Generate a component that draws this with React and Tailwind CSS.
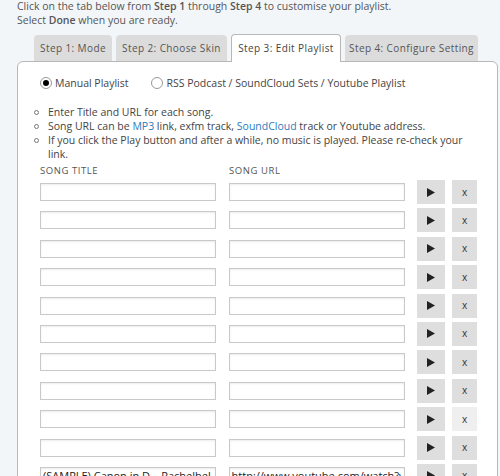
import React from 'react'

const rows = Array.from({ length: 10 }, () => ({ title: '', url: '' }))
rows.push({ title: '(SAMPLE) Canon in D – Pachelbel', url: 'http://www.youtube.com/watch?v=8Af372EQLck' })

function Tab({ label, width, active }) {
  return (
    <div
      className={`${width} whitespace-nowrap flex items-center justify-center rounded-t-[4px] text-[10px] tracking-[0.04em] ${
        active
          ? 'bg-white border border-b-0 border-[#b8b8b8] h-[28px] relative top-[1px] text-[#444]'
          : 'bg-[#dcdcdc] text-[#555] h-[26px]'
      }`}
    >
      {label}
    </div>
  )
}

function Radio({ checked, label }) {
  return (
    <label className="flex items-center gap-[3px]">
      <span className="w-[12px] h-[12px] rounded-full border border-[#999] bg-white flex items-center justify-center">
        {checked && <span className="w-[6px] h-[6px] rounded-full bg-black" />}
      </span>
      <span>{label}</span>
    </label>
  )
}

function Bullet({ children }) {
  return (
    <li className="flex gap-[9px]">
      <span className="mt-[5px] w-[5px] h-[5px] rounded-full border border-[#777] shrink-0" />
      <span>{children}</span>
    </li>
  )
}

export default function App() {
  return (
    <div
      className="w-[500px] h-[476px] overflow-hidden bg-[#f3f6f9] text-[#555] text-[10.5px]"
      style={{ fontFamily: '"Open Sans", "Liberation Sans", sans-serif' }}
    >
      <div className="pl-[17px] leading-[14px] -mt-[1px]">
        <p>
          Click on the tab below from <b className="font-semibold">Step 1</b> through{' '}
          <b className="font-semibold">Step 4</b> to customise your playlist.
        </p>
        <p>
          Select <b className="font-semibold">Done</b> when you are ready.
        </p>
      </div>

      {/* Tabs */}
      <div className="flex items-end gap-[4px] pl-[34px] mt-[6px] relative z-10">
        <Tab width="w-[78px]" label="Step 1: Mode" />
        <Tab width="w-[111px]" label="Step 2: Choose Skin" />
        <Tab width="w-[110px]" label="Step 3: Edit Playlist" active />
        <Tab width="w-[133px]" label="Step 4: Configure Setting" />
      </div>

      {/* Panel */}
      <div className="ml-[17px] w-[481px] h-[500px] bg-white border border-[#b8b8b8] rounded-t-[6px] pl-[22px] pr-[20px] pt-[14px]">
        <div className="flex items-center gap-[23px] text-[#444] leading-[14px]">
          <Radio checked label="Manual Playlist" />
          <Radio label="RSS Podcast / SoundCloud Sets / Youtube Playlist" />
        </div>

        <ul className="mt-[15px] -ml-[6px] leading-[14px] text-[#444]">
          <Bullet>Enter Title and URL for each song.</Bullet>
          <Bullet>
            Song URL can be <span className="text-[#2b7bbd]">MP3</span> link, exfm track,{' '}
            <span className="text-[#2b7bbd]">SoundCloud</span> track or Youtube address.
          </Bullet>
          <Bullet>
            If you click the Play button and after a while, no music is played. Please re-check your
            link.
          </Bullet>
        </ul>

        <div className="flex mt-[3px] leading-[14px] text-[9.5px] tracking-[0.06em] text-[#555]">
          <span className="w-[189px]">SONG TITLE</span>
          <span>SONG URL</span>
        </div>

        <div className="flex flex-col gap-[4.4px] mt-[2px]">
          {rows.map((r, i) => (
            <div key={i} className="flex items-center h-[24px]">
              <input
                readOnly
                value={r.title}
                className="w-[176px] h-[18px] border border-[#c9c9c9] shadow-[inset_0_1px_2px_rgba(0,0,0,0.08)] px-[2px] text-[11px] text-[#222] outline-none"
              />
              <input
                readOnly
                value={r.url}
                className="ml-[13px] w-[177px] h-[18px] border border-[#c9c9c9] shadow-[inset_0_1px_2px_rgba(0,0,0,0.08)] px-[2px] text-[11px] text-[#222] outline-none"
              />
              <button className="ml-[12px] w-[28px] h-[24px] bg-[#dedede] flex items-center justify-center">
                <svg width="8" height="9" viewBox="0 0 8 9">
                  <path d="M0 0 L8 4.5 L0 9 Z" fill="#222" />
                </svg>
              </button>
              <button
                className={`ml-[7px] w-[25px] h-[24px] flex items-center justify-center text-[10px] text-[#333] ${
                  i === 8 ? 'bg-[#efefef]' : 'bg-[#dedede]'
                }`}
              >
                x
              </button>
            </div>
          ))}
        </div>
      </div>
    </div>
  )
}
